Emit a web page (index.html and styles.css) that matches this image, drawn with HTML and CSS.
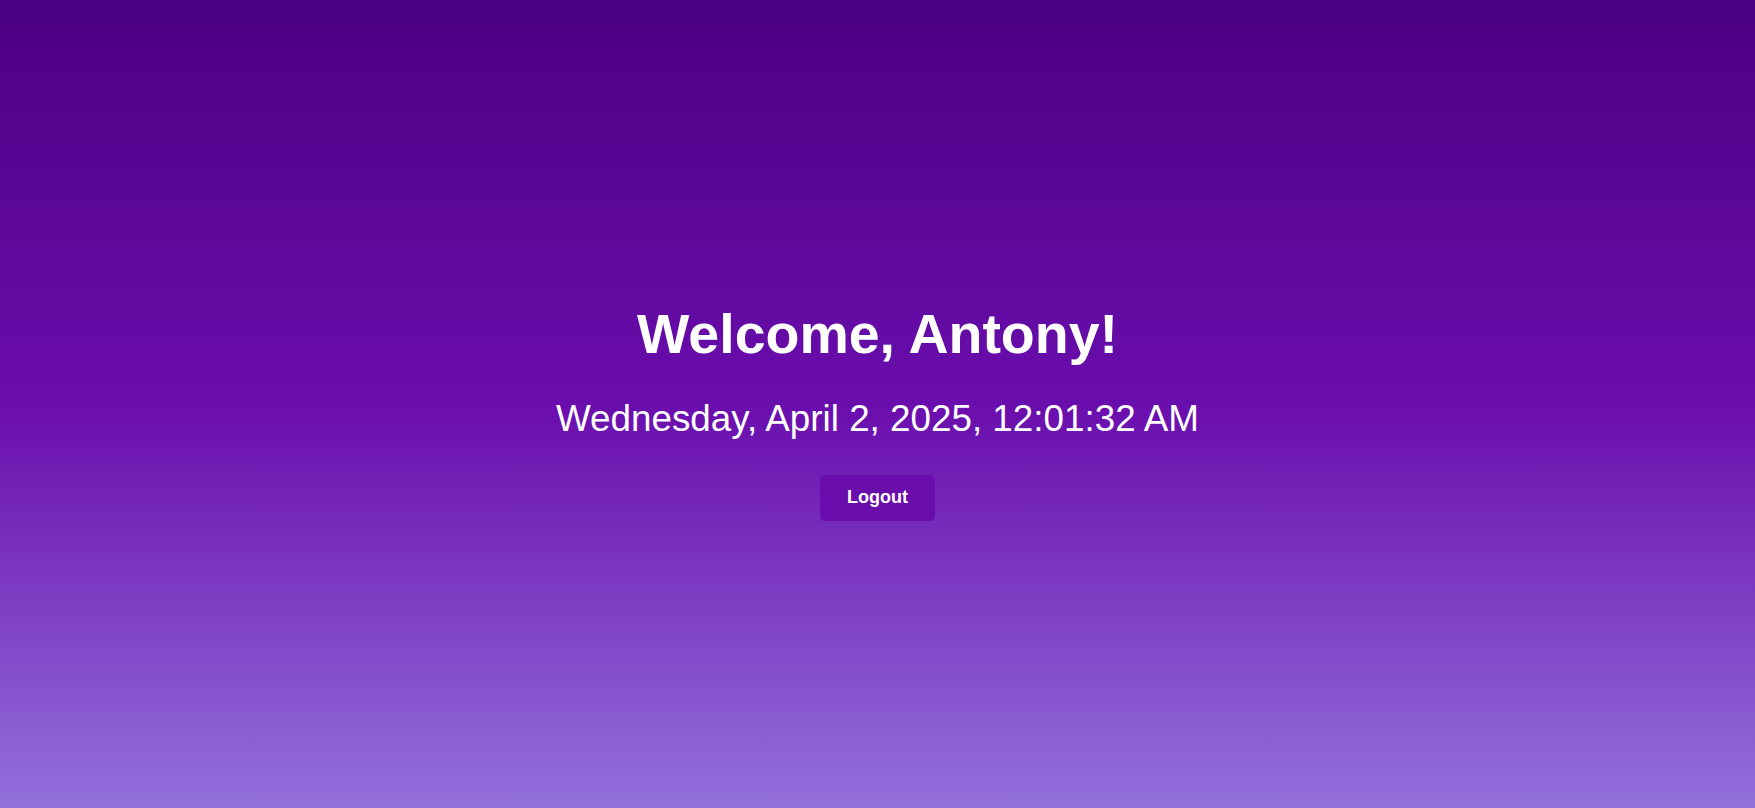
FILE: index.html
```html
<!DOCTYPE html>
<html lang="en">
<head>
<meta charset="utf-8">
<title>Welcome</title>
<link rel="stylesheet" href="styles.css">
</head>
<body>
<main class="page">
  <h1 class="title">Welcome, Antony!</h1>
  <p class="datetime">Wednesday, April 2, 2025, 12:01:32 AM</p>
  <button class="logout" type="button">Logout</button>
</main>
</body>
</html>
```
FILE: styles.css
```css
html, body {
  margin: 0;
  padding: 0;
  height: 100%;
}
body {
  background: linear-gradient(to bottom, #4b0082 0%, #6a0dad 50%, #9370db 100%);
  font-family: "Liberation Sans", Arial, sans-serif;
  color: #ffffff;
}
.page {
  height: 100%;
  box-sizing: border-box;
  padding-top: 16px;
  display: flex;
  flex-direction: column;
  align-items: center;
  justify-content: center;
}
.title {
  margin: 0;
  font-size: 55.5px;
  font-weight: bold;
  line-height: 60px;
}
.datetime {
  margin: 35px 0 0;
  font-size: 36.8px;
  line-height: 40px;
}
.logout {
  margin-top: 36px;
  width: 115px;
  height: 46px;
  border: none;
  border-radius: 5px;
  background: #6a0dad;
  color: #ffffff;
  font-family: "Liberation Sans", Arial, sans-serif;
  font-size: 18px;
  font-weight: bold;
  padding: 0;
  cursor: pointer;
}
```
